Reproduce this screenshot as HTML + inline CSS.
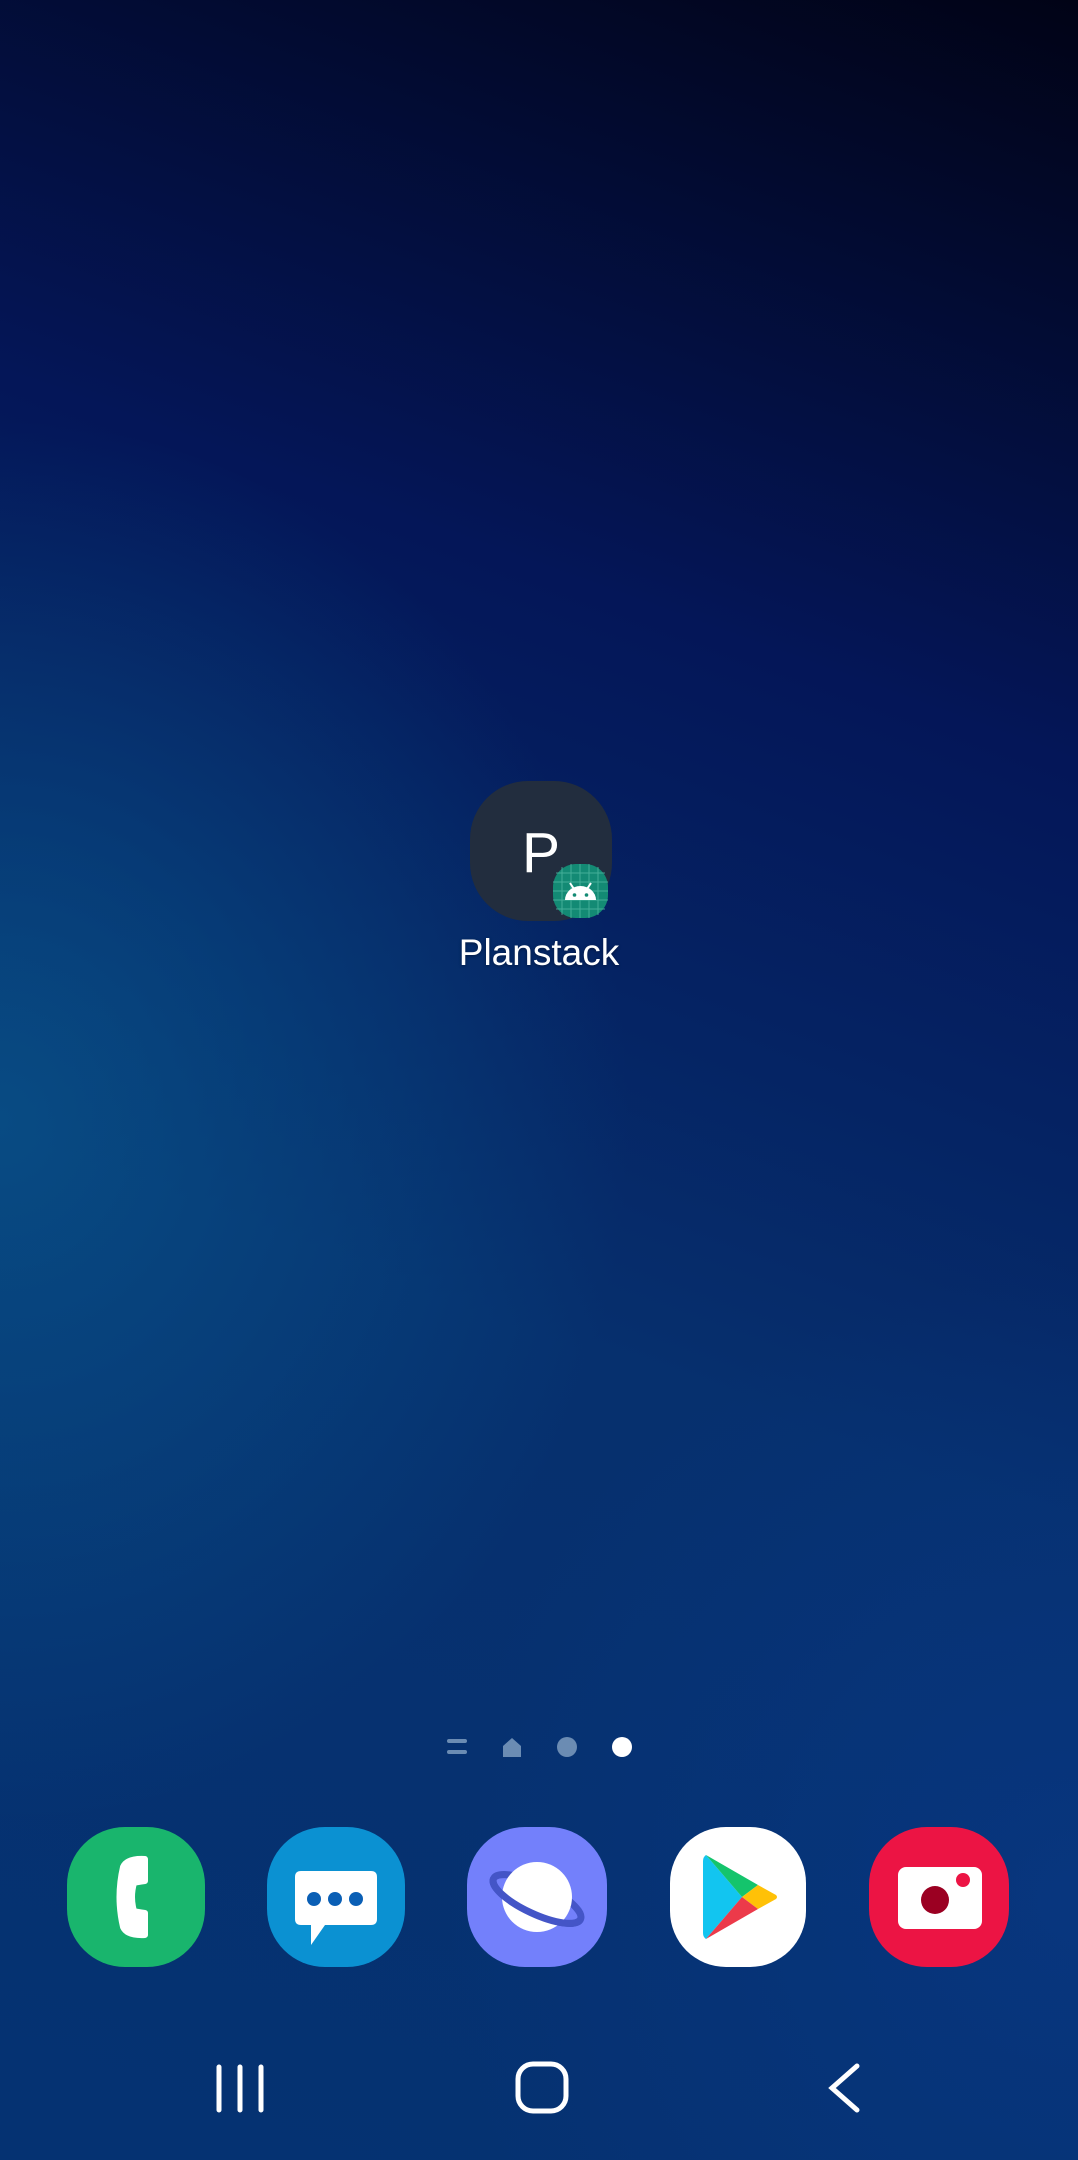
<!DOCTYPE html>
<html><head><meta charset="utf-8"><style>
html,body{margin:0;padding:0}
body{width:1078px;height:2160px;overflow:hidden;position:relative;font-family:"Liberation Sans",sans-serif;
background:
radial-gradient(ellipse 900px 1000px at 0px 1120px, rgba(8,80,135,0.85), rgba(8,80,135,0) 70%),
radial-gradient(ellipse 900px 900px at 1078px 1900px, rgba(8,55,130,0.8), rgba(8,55,130,0) 70%),
linear-gradient(200deg,#010316 0%,#041658 30%,#06306e 60%,#053272 100%);
}
.a{position:absolute}
.lbl{position:absolute;left:0;width:1078px;top:932px;text-align:center;color:#fff;font-size:37px;text-shadow:0 1px 3px rgba(0,0,0,.4)}
</style></head><body>
<svg class="a" style="left:0;top:0" width="1078" height="2160" viewBox="0 0 1078 2160">
<rect x="470" y="781" width="142" height="140" rx="58" fill="#222d3e"/>
<text x="541" y="872" text-anchor="middle" font-family="Liberation Sans" font-size="57" fill="#fff">P</text>
<g transform="translate(553,864)">
<rect width="55" height="54" rx="23" fill="#138a74"/>
<g stroke="#4fb8a2" stroke-width="1" opacity="0.8">
<path d="M9 3V51M18 0V54M27 0V54M36 0V54M45 3V51M3 9H52M0 18H55M0 27H55M0 36H55M3 45H52"/>
</g>
<path d="M12 36 A15.5 14 0 0 1 43 36 Z" fill="#fff"/>
<path d="M17 19 L21 25 M38 19 L34 25" stroke="#fff" stroke-width="2"/>
<circle cx="21.5" cy="31" r="1.8" fill="#138a74"/><circle cx="33.5" cy="31" r="1.8" fill="#138a74"/>
</g>
<rect x="447" y="1739" width="20" height="4" rx="2" fill="#6b8cb3"/>
<rect x="447" y="1750" width="20" height="4" rx="2" fill="#6b8cb3"/>
<path d="M503 1757 V1746 L512 1738 L521 1746 V1757 Z" fill="#6b8cb3"/>
<circle cx="567" cy="1747" r="10" fill="#6b8cb3"/>
<circle cx="622" cy="1747" r="10" fill="#fff"/>
<g transform="translate(67,1827)">
<rect width="138" height="140" rx="58" fill="#19b56d"/>
<path d="M78 32 Q60 31 56 40 Q49 70 56 100 Q60 109 78 108 V86 Q70 85 67 84 Q63 70 67 56 Q70 55 78 54 Z" fill="#fff" stroke="#fff" stroke-width="6" stroke-linejoin="round"/>
</g>
<g transform="translate(267,1827)">
<rect width="138" height="140" rx="58" fill="#0b91d2"/>
<path d="M34 44 Q28 44 28 50 V92 Q28 98 34 98 H44 V118 L58 98 H104 Q110 98 110 92 V50 Q110 44 104 44 Z" fill="#fff"/>
<circle cx="47" cy="72" r="7" fill="#0a5fb5"/><circle cx="68" cy="72" r="7" fill="#0a5fb5"/><circle cx="89" cy="72" r="7" fill="#0a5fb5"/>
</g>
<g transform="translate(467,1827)">
<rect width="140" height="140" rx="58" fill="#7380fb"/>
<g transform="rotate(25 70 72)">
<ellipse cx="70" cy="72" rx="48" ry="15" fill="none" stroke="#4455c7" stroke-width="7"/>
</g>
<circle cx="70" cy="70" r="35" fill="#fff"/>
<g transform="rotate(25 70 72)">
<path d="M22 72 A48 15 0 0 0 118 72" fill="none" stroke="#4455c7" stroke-width="7"/>
</g>
</g>
<g transform="translate(670,1827)">
<rect width="136" height="140" rx="56" fill="#fff"/>
<path d="M36 28 L72 70 L36 112 Q33 110 33 106 V34 Q33 30 36 28Z" fill="#12c5f0"/>
<path d="M36 28 L88 58 L72 70 Z" fill="#14c46c"/>
<path d="M72 70 L88 58 L106 68 Q108 70 106 72 L88 82 Z" fill="#ffc107"/>
<path d="M36 112 L72 70 L88 82 Z" fill="#ec3a4a"/>
</g>
<g transform="translate(869,1827)">
<rect width="140" height="140" rx="58" fill="#ec1444"/>
<rect x="29" y="40" width="84" height="62" rx="8" fill="#fff"/>
<circle cx="66" cy="73" r="14" fill="#9b0022"/>
<circle cx="94" cy="53" r="7" fill="#ec1444"/>
</g>
<g stroke="#fff" stroke-width="5" stroke-linecap="round" fill="none">
<path d="M219 2067 V2110 M240 2067 V2110 M261 2067 V2110"/>
<rect x="518" y="2064" width="48" height="47" rx="15"/>
<path d="M857 2066 L832 2088 L857 2110"/>
</g>
</svg>
<div class="lbl">Planstack</div>
</body></html>
